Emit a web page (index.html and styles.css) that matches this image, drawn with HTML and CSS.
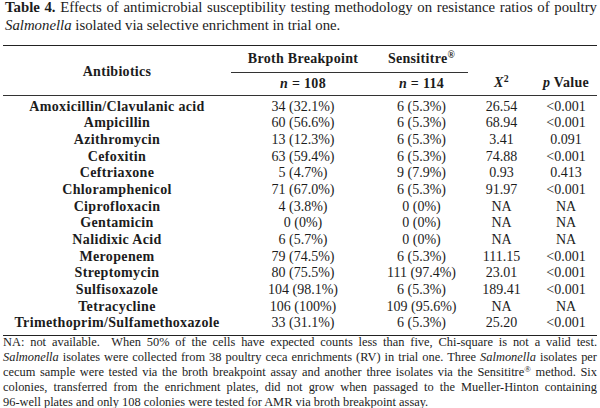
FILE: index.html
```html
<!DOCTYPE html>
<html>
<head>
<meta charset="utf-8">
<link rel="stylesheet" href="styles.css">
</head>
<body>
<div class="page">
  <div class="caption">
    <div class="just"><b>Table 4.</b> Effects of antimicrobial susceptibility testing methodology on resistance ratios of poultry</div>
    <div><i>Salmonella</i> isolated via selective enrichment in trial one.</div>
  </div>
  <table class="data">
    <colgroup><col class="c1"><col class="c2"><col class="c3"><col class="c4"><col class="c5"></colgroup>
    <thead>
      <tr class="h1">
        <th rowspan="2" class="name">Antibiotics</th>
        <th class="grp">Broth Breakpoint</th>
        <th class="grp">Sensititre<sup>®</sup></th>
        <th></th>
        <th></th>
      </tr>
      <tr class="h2">
        <th><i>n</i> = 108</th>
        <th><i>n</i> = 114</th>
        <th><i>X</i><sup class="sq">2</sup></th>
        <th><i>p</i> Value</th>
      </tr>
    </thead>
    <tbody>
      <tr><th>Amoxicillin/Clavulanic acid</th><td>34 (32.1%)</td><td>6 (5.3%)</td><td>26.54</td><td>&lt;0.001</td></tr>
      <tr><th>Ampicillin</th><td>60 (56.6%)</td><td>6 (5.3%)</td><td>68.94</td><td>&lt;0.001</td></tr>
      <tr><th>Azithromycin</th><td>13 (12.3%)</td><td>6 (5.3%)</td><td>3.41</td><td>0.091</td></tr>
      <tr><th>Cefoxitin</th><td>63 (59.4%)</td><td>6 (5.3%)</td><td>74.88</td><td>&lt;0.001</td></tr>
      <tr><th>Ceftriaxone</th><td>5 (4.7%)</td><td>9 (7.9%)</td><td>0.93</td><td>0.413</td></tr>
      <tr><th>Chloramphenicol</th><td>71 (67.0%)</td><td>6 (5.3%)</td><td>91.97</td><td>&lt;0.001</td></tr>
      <tr><th>Ciprofloxacin</th><td>4 (3.8%)</td><td>0 (0%)</td><td>NA</td><td>NA</td></tr>
      <tr><th>Gentamicin</th><td>0 (0%)</td><td>0 (0%)</td><td>NA</td><td>NA</td></tr>
      <tr><th>Nalidixic Acid</th><td>6 (5.7%)</td><td>0 (0%)</td><td>NA</td><td>NA</td></tr>
      <tr><th>Meropenem</th><td>79 (74.5%)</td><td>6 (5.3%)</td><td>111.15</td><td>&lt;0.001</td></tr>
      <tr><th>Streptomycin</th><td>80 (75.5%)</td><td>111 (97.4%)</td><td>23.01</td><td>&lt;0.001</td></tr>
      <tr><th>Sulfisoxazole</th><td>104 (98.1%)</td><td>6 (5.3%)</td><td>189.41</td><td>&lt;0.001</td></tr>
      <tr><th>Tetracycline</th><td>106 (100%)</td><td>109 (95.6%)</td><td>NA</td><td>NA</td></tr>
      <tr><th>Trimethoprim/Sulfamethoxazole</th><td>33 (31.1%)</td><td>6 (5.3%)</td><td>25.20</td><td>&lt;0.001</td></tr>
    </tbody>
  </table>
  <div class="notes">
    <div class="just">NA: not available.&nbsp; When 50% of the cells have expected counts less than five, Chi-square is not a valid test.</div>
    <div class="just"><i>Salmonella</i> isolates were collected from 38 poultry ceca enrichments (RV) in trial one. Three <i>Salmonella</i> isolates per</div>
    <div class="just">cecum sample were tested via the broth breakpoint assay and another three isolates via the Sensititre<sup>®</sup> method. Six</div>
    <div class="just">colonies, transferred from the enrichment plates, did not grow when passaged to the Mueller-Hinton containing</div>
    <div>96-well plates and only 108 colonies were tested for AMR via broth breakpoint assay.</div>
  </div>
</div>
</body>
</html>
```

FILE: styles.css
```css
html, body {
  margin: 0;
  padding: 0;
  background: #ffffff;
}

body {
  font-family: "Liberation Serif", "Times New Roman", serif;
  color: #1c1c1c;
}

.page {
  width: 594px;
  height: 408px;
  padding: 0 3px;
  overflow: hidden;
}

.caption {
  font-size: 14.8px;
  line-height: 18.3px;
  margin-top: -2.5px;
  padding-left: 2px;
}

.just {
  text-align: justify;
  text-align-last: justify;
}

.data {
  width: 594px;
  table-layout: fixed;
  border-collapse: collapse;
  margin-top: 11px;
  font-size: 14px;
  border-top: 1.5px solid #222;
  border-bottom: 1.5px solid #222;
}

.c1 { width: 228px; }
.c2 { width: 144px; }
.c3 { width: 93px; }
.c4 { width: 67px; }
.c5 { width: 62px; }

.data th,
.data td {
  padding: 0;
  text-align: center;
  vertical-align: middle;
  white-space: nowrap;
}

.data thead th {
  font-weight: bold;
  letter-spacing: 0.3px;
}

.h1 th {
  height: 25.5px;
}

.h1 th.grp {
  border-bottom: 1px solid #333;
}

.h1 th.name {
  border-bottom: 1px solid #333;
  padding-top: 3px;
}

.h2 th {
  height: 22px;
  border-bottom: 1px solid #333;
}

.data sup {
  font-size: 0.7em;
  line-height: 0;
  vertical-align: 0.55em;
}

.data tbody th {
  font-weight: bold;
  letter-spacing: 0.35px;
}

.data tbody th,
.data tbody td {
  height: 16.67px;
  line-height: 16.67px;
}

.data tbody tr:first-child th,
.data tbody tr:first-child td {
  padding-top: 3px;
}

.data tbody tr:last-child th,
.data tbody tr:last-child td {
  padding-bottom: 3px;
}

.notes {
  font-size: 12.4px;
  line-height: 15px;
  margin-top: -1px;
}

.notes sup {
  font-size: 0.7em;
  line-height: 0;
  vertical-align: 0.5em;
}
```
